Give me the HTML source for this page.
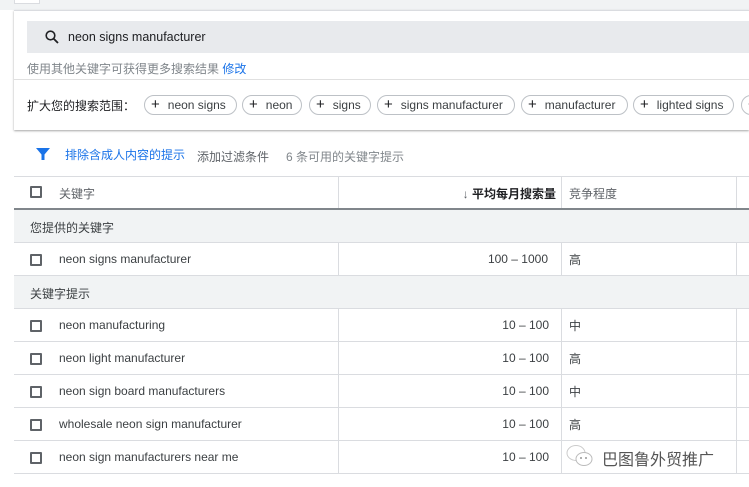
<!DOCTYPE html>
<html><head><meta charset="utf-8"><style>
*{box-sizing:border-box;margin:0;padding:0}
body{width:749px;height:487px;overflow:hidden;background:#fff;font-family:"Liberation Sans","Noto Sans CJK SC",sans-serif;font-size:12px;color:#3c4043;position:relative}
.abs{position:absolute}
.chip{position:absolute;top:95px;height:20px;border:1px solid #bdc1c6;border-radius:10px;font-size:12px;line-height:18px;padding:0 10px 0 6px;white-space:nowrap;color:#3c4043}
.chip b{font-weight:normal;font-size:15px;margin-right:8px;color:#202124}
.row{position:absolute;left:14px;width:735px;height:33px;border-bottom:1px solid #dadce0;font-size:12px}
.row .cb{position:absolute;left:16px;top:11px;width:12px;height:12px;border:2px solid #5f6368;border-radius:1px}
.row .k{position:absolute;left:45px;top:9px}
.row .v{position:absolute;right:200px;top:9px}
.row .c{position:absolute;left:555px;top:8px}
.vl{position:absolute;width:1px;background:#dadce0}
.grp{background:#f1f3f4}
.grp .k{left:16px}
</style></head><body>
<div class="abs" style="left:0;top:0;width:749px;height:10px;background:#f1f3f4"></div>
<div class="abs" style="left:14px;top:0;width:26px;height:4px;background:#fff;border:1px solid #dadce0;border-top:0"></div>
<div class="abs" style="left:14px;top:10px;width:735px;height:120px;background:#fff;box-shadow:0 1px 2px rgba(0,0,0,.35);border-top:1px solid #dadce0"></div>
<div class="abs" style="left:27px;top:21px;width:722px;height:32px;background:#e8eaed"></div>
<svg class="abs" style="left:44px;top:29px" width="16" height="16" viewBox="0 0 16 16"><circle cx="6.5" cy="6.5" r="4.3" fill="none" stroke="#202124" stroke-width="1.6"/><path d="M9.6 9.6L14 14" stroke="#202124" stroke-width="1.8"/></svg>
<div class="abs" style="left:68px;top:30px;font-size:12.5px;color:#202124">neon signs manufacturer</div>
<div class="abs" style="left:27px;top:60px;color:#80868b;font-size:12px">使用其他关键字可获得更多搜索结果 <span style="color:#1a73e8">修改</span></div>
<div class="abs" style="left:14px;top:79px;width:735px;height:1px;background:#e0e0e0"></div>
<div class="abs" style="left:27px;top:97px;color:#202124;font-size:12px">扩大您的搜索范围：</div>
<div class="chip" style="left:144px;width:93px"><b>+</b>neon signs</div>
<div class="chip" style="left:242px;width:60px"><b>+</b>neon</div>
<div class="chip" style="left:309px;width:62px"><b>+</b>signs</div>
<div class="chip" style="left:377px;width:138px"><b>+</b>signs manufacturer</div>
<div class="chip" style="left:521px;width:107px"><b>+</b>manufacturer</div>
<div class="chip" style="left:633px;width:101px"><b>+</b>lighted signs</div>
<div class="chip" style="left:741px;width:40px"><b>+</b></div>
<svg class="abs" style="left:36px;top:147px" width="14" height="14" viewBox="0 0 14 14"><path d="M0 1H14L8.5 7.5V13H5.5V7.5Z" fill="#1a73e8"/></svg>
<div class="abs" style="left:65px;top:146px;color:#1a73e8">排除含成人内容的提示</div>
<div class="abs" style="left:197px;top:148px;color:#5f6368">添加过滤条件</div>
<div class="abs" style="left:286px;top:148px;color:#80868b">6 条可用的关键字提示</div>
<div class="abs" style="left:14px;top:176px;width:735px;height:1px;background:#dadce0"></div>
<div class="row" style="top:177px;height:33px;border-bottom:2px solid #80868b">
<div class="cb" style="top:9px"></div><div class="k" style="color:#5f6368;top:8px">关键字</div>
<div class="v" style="top:8px;right:193px;font-weight:bold;color:#202124"><span style="font-weight:normal;color:#5f6368">↓</span> 平均每月搜索量</div>
<div class="c" style="top:8px;color:#5f6368">竞争程度</div></div>
<div class="vl" style="left:338px;top:177px;height:31px"></div>
<div class="vl" style="left:561px;top:177px;height:31px"></div>
<div class="vl" style="left:736px;top:177px;height:31px"></div>
<div class="row grp" style="top:210px"><div class="k">您提供的关键字</div></div>
<div class="row" style="top:243px"><div class="cb"></div><div class="k">neon signs manufacturer</div><div class="v" style="right:201px">100 – 1000</div><div class="c">高</div></div>
<div class="row grp" style="top:276px"><div class="k">关键字提示</div></div>
<div class="row" style="top:309px"><div class="cb"></div><div class="k">neon manufacturing</div><div class="v">10 – 100</div><div class="c">中</div></div>
<div class="row" style="top:342px"><div class="cb"></div><div class="k">neon light manufacturer</div><div class="v">10 – 100</div><div class="c">高</div></div>
<div class="row" style="top:375px"><div class="cb"></div><div class="k">neon sign board manufacturers</div><div class="v">10 – 100</div><div class="c">中</div></div>
<div class="row" style="top:408px"><div class="cb"></div><div class="k">wholesale neon sign manufacturer</div><div class="v">10 – 100</div><div class="c">高</div></div>
<div class="row" style="top:441px"><div class="cb"></div><div class="k">neon sign manufacturers near me</div><div class="v">10 – 100</div><div class="c"></div></div>
<div class="vl" style="left:338px;top:243px;height:32px"></div><div class="vl" style="left:561px;top:243px;height:32px"></div><div class="vl" style="left:736px;top:243px;height:32px"></div>
<div class="vl" style="left:338px;top:309px;height:164px"></div><div class="vl" style="left:561px;top:309px;height:164px"></div><div class="vl" style="left:736px;top:309px;height:164px"></div>
<svg class="abs" style="left:565px;top:443px" width="30" height="26" viewBox="0 0 30 26"><ellipse cx="11" cy="10" rx="9" ry="7.5" fill="#fff" stroke="#ccc"/><ellipse cx="19" cy="16" rx="8" ry="6.5" fill="#fff" stroke="#bbb"/><circle cx="16" cy="15" r="1" fill="#999"/><circle cx="21" cy="15" r="1" fill="#999"/></svg>
<div class="abs" style="left:602px;top:446px;font-size:16px;color:#555">巴图鲁外贸推广</div>
</body></html>
